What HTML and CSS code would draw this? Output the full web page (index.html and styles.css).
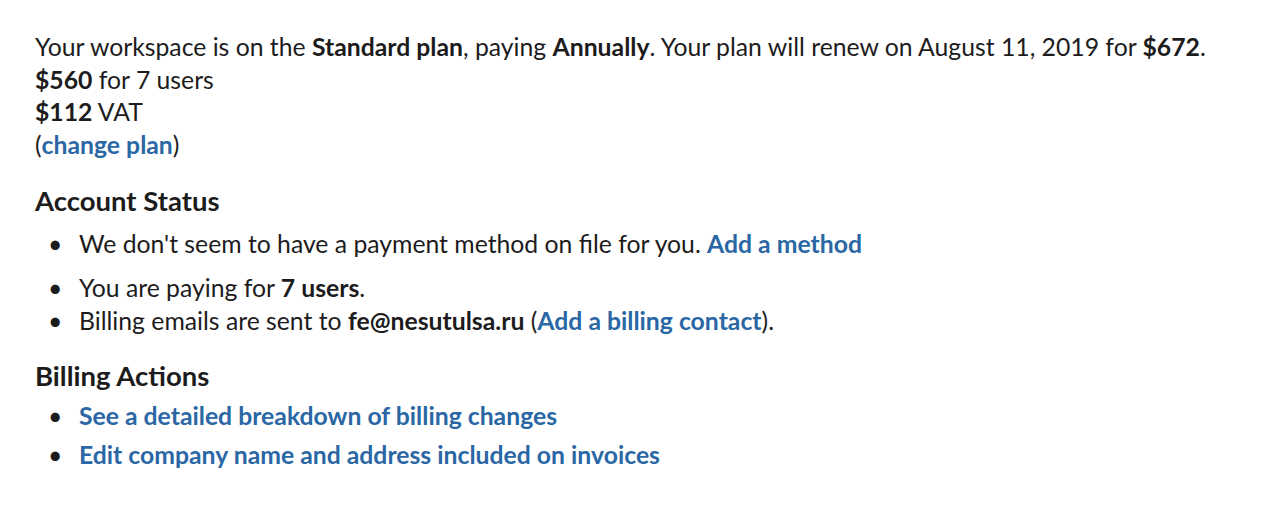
FILE: index.html
```html
<!DOCTYPE html>
<html>
<head>
    <title>Billing</title>
    <link rel="stylesheet" href="styles.css">
</head>
<body>
    <div class="billing">
        <p class="summary">
            Your workspace is on the <b>Standard plan</b>, paying <b>Annually</b>. Your plan will renew on August 11, 2019 for <b>$672</b>.<br>
            <b>$560</b> for 7 users<br>
            <b>$112</b> VAT<br>
            (<a href="#">change plan</a>)
        </p>

        <h2>Account Status</h2>
        <ul class="status">
            <li class="first">We don't seem to have a payment method on file for you. <a href="#">Add a method</a></li>
            <li>You are paying for <b>7 users</b>.</li>
            <li>Billing emails are sent to <b>fe@nesutulsa.ru</b> (<a href="#">Add a billing contact</a>).</li>
        </ul>

        <h2>Billing Actions</h2>
        <ul class="actions">
            <li><a href="#">See a detailed breakdown of billing changes</a></li>
            <li><a href="#">Edit company name and address included on invoices</a></li>
        </ul>
    </div>
</body>
</html>
```

FILE: styles.css
```css
body {
    margin: 0;
    background: #fff;
    color: #1d1c1d;
    font-family: Lato, "Open Sans", sans-serif;
}
.billing {
    padding: 31px 35px;
    font-size: 24.75px;
    line-height: 32.7px;
}
.summary {
    margin: 0;
}
b {
    font-weight: 700;
}
a {
    color: #2a67a4;
    font-weight: 700;
    text-decoration: none;
}
h2 {
    margin: 22px 0 3px;
    font-size: 27.5px;
    font-weight: 700;
    line-height: 34px;
}
ul {
    margin: 0;
    padding-left: 44px;
    list-style: none;
}
li {
    line-height: 33px;
}
li::before {
    content: "\2022";
    display: inline-block;
    width: 31px;
    margin-left: -31px;
}
.status {
    margin-top: 9px;
}
.status li.first {
    margin-bottom: 11px;
}
.actions li {
    line-height: 39px;
}
```
